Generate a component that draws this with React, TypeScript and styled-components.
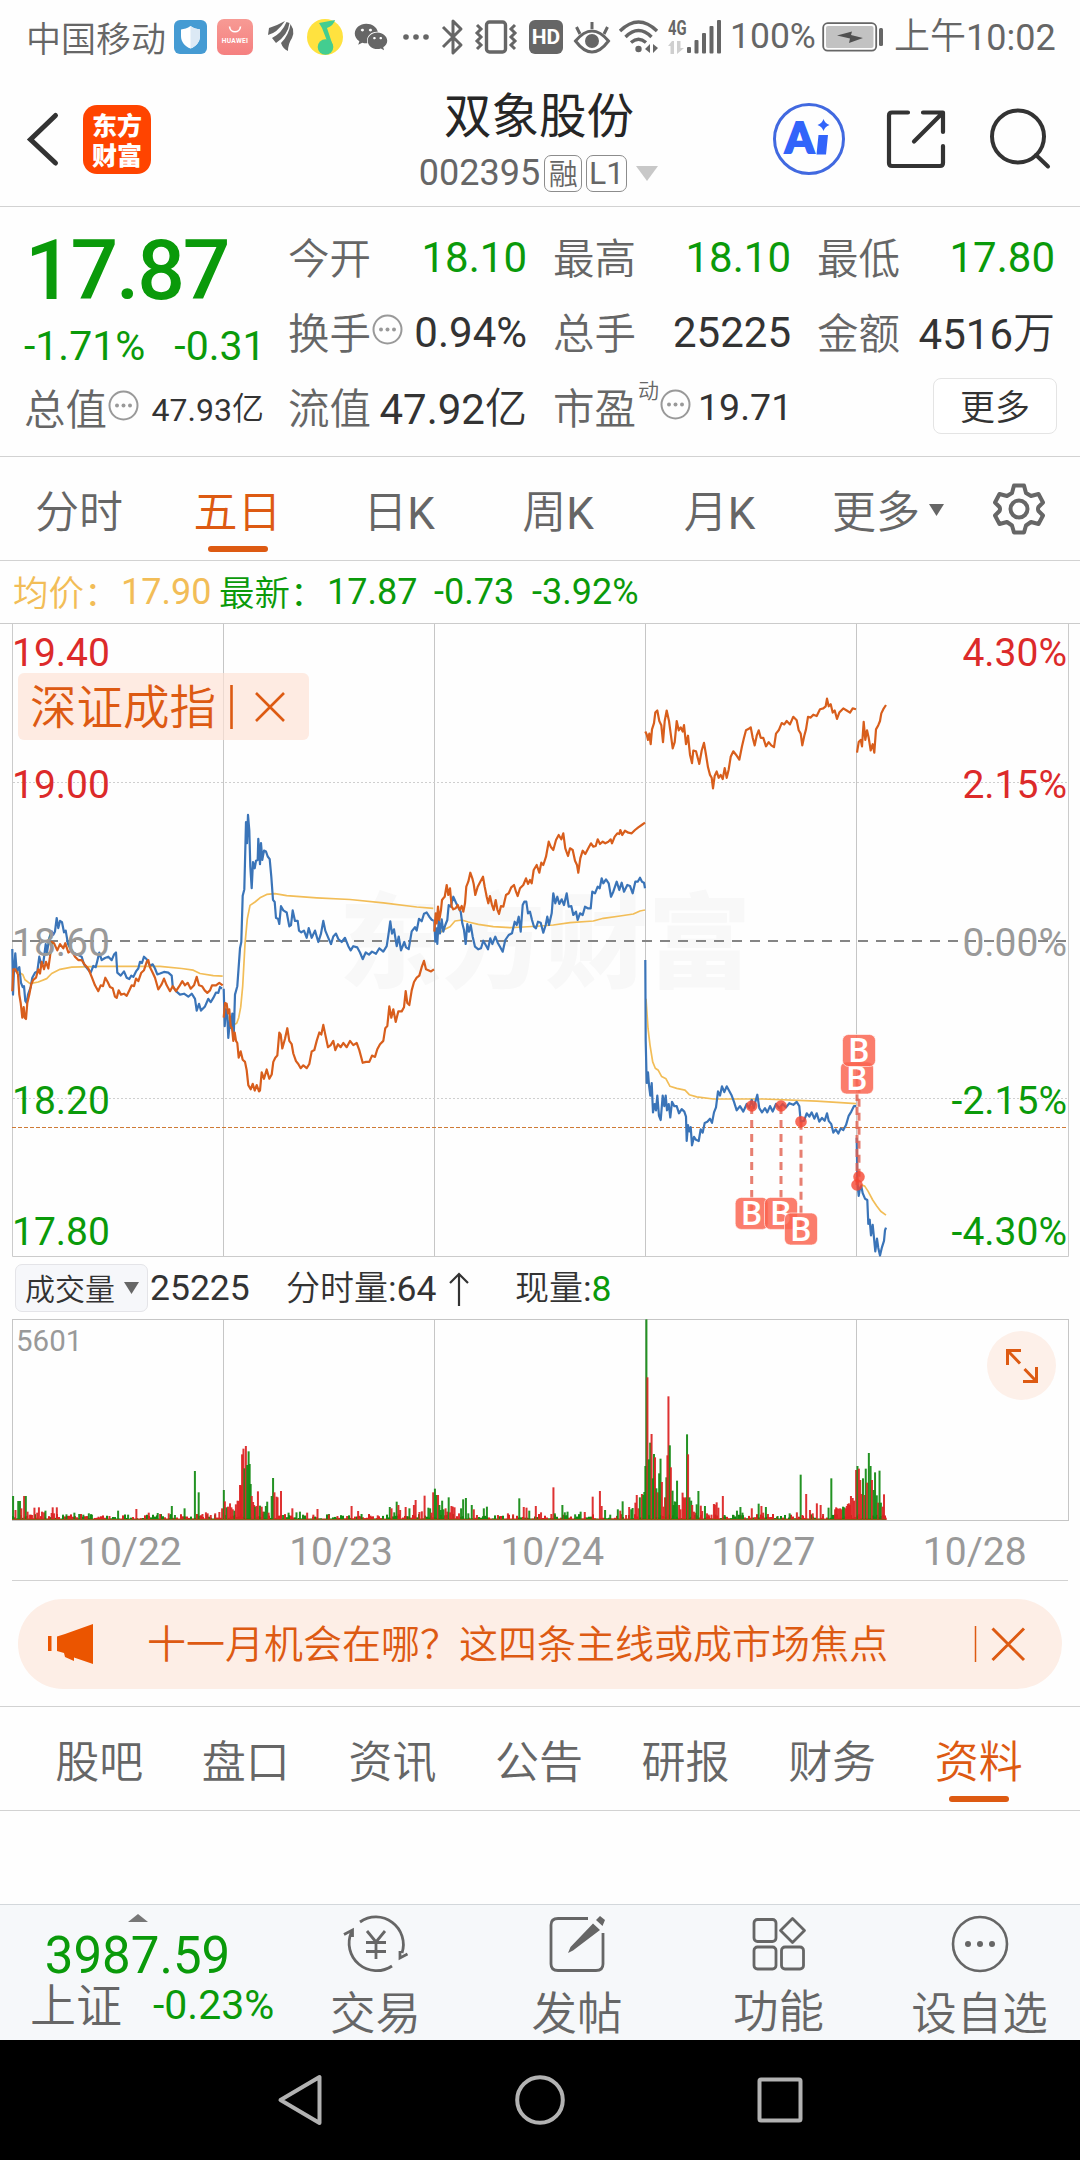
import React from 'react';
import styled, { createGlobalStyle } from 'styled-components';
import { FaWeixin } from 'react-icons/fa';

const C = {
  green: '#0a9a0a',
  red: '#dc2a2a',
  orange: '#dd5a12',
  ink: '#333333',
  grey: '#666666',
  pale: '#999999',
  line: '#d2d2d2',
  yellow: '#f2bd57',
  blue: '#3a74b8',
};

const Global = createGlobalStyle`
  html, body { margin: 0; padding: 0; background: #fdfdfd; }
  body { font-family: Roboto, "Noto Sans CJK SC", sans-serif; -webkit-font-smoothing: antialiased; }
  * { box-sizing: border-box; }
`;

const Page = styled.main`
  width: 1080px;
  height: 2160px;
  display: flex;
  flex-direction: column;
  background: #fefefe;
  color: ${C.ink};
  overflow: hidden;
`;

/* Chinese text is set one weight lighter than the figures beside it. */
const Han = styled.span<{ $up?: number }>`
  display: inline-block;
  font-family: "Noto Sans CJK SC", sans-serif;
  font-weight: 350;
  transform: translateY(-${(p) => p.$up ?? 1.5}px);
`;

const Glyph = styled.svg<{ $l?: number }>`
  flex: none;
  display: block;
  overflow: visible;
  margin-left: ${(p) => p.$l ?? 0}px;
`;

/* ---------- status bar ---------- */

const StatusBar = styled.header`
  height: 73px;
  flex: none;
  display: flex;
  align-items: center;
  padding-left: 26px;
  color: ${C.grey};
  font-size: 36px;
  line-height: 73px;
  white-space: nowrap;
`;

const Carrier = styled(Han)`
  flex: none;
  width: 139px;
  font-size: 35px;
`;

const StatusText = styled.span<{ $w: number; $l?: number; $size?: number }>`
  flex: none;
  width: ${(p) => p.$w}px;
  margin-left: ${(p) => p.$l ?? 0}px;
  font-size: ${(p) => p.$size ?? 36}px;
`;

const WeChat = styled(FaWeixin)`
  flex: none;
  width: 34px;
  height: 34px;
  margin-left: 11px;
`;

const AppStore = styled.span`
  flex: none;
  width: 36px;
  height: 36px;
  margin-left: 10px;
  border-radius: 7px;
  background: linear-gradient(#f79a94, #f58080);
  color: #fff;
  display: flex;
  flex-direction: column;
  align-items: center;
  gap: 2px;
  font-size: 6.6px;
  font-weight: 700;
  line-height: 8px;
  letter-spacing: 0.3px;
`;

const HdBadge = styled.span`
  flex: none;
  width: 34px;
  height: 34px;
  margin-left: 12px;
  border-radius: 6px;
  background: ${C.grey};
  color: #fff;
  font-size: 21px;
  font-weight: 700;
  line-height: 34px;
  text-align: center;
`;

const Cellular = styled.span`
  flex: none;
  display: flex;
  align-items: flex-end;
  margin-left: 9px;
  height: 34px;
`;

const Generation = styled.span`
  display: flex;
  flex-direction: column;
  gap: 5px;
  width: 19px;
  height: 34px;
  font-size: 20px;
  font-weight: 700;
  line-height: 16px;
  span { transform: scaleX(0.74); transform-origin: left; }
`;

function StatusIcons() {
  return (
    <>
      <Glyph width="33" height="34" viewBox="0 0 33 34" $l={9}>
        <rect width="33" height="34" rx="6" fill="#459bd3" />
        <path d="M16.500 6 C19.500 8.500 23 9 26 9.500 V16 C26 22 22 26.500 16.500 28.500 C11 26.500 7 22 7 16 V9.500 C10 9 13.500 8.500 16.500 6Z" fill="#fff" />
        <path d="M16.500 6 C19.500 8.500 23 9 26 9.500 V16 C26 22 22 26.500 16.500 28.500Z" fill="#dce9f5" />
      </Glyph>
      <AppStore>
        <Glyph width="14" height="16" viewBox="0 0 14 16">
          <path d="M1.500 7.500 C2 14.500 12 14.500 12.500 7.500" fill="none" stroke="#fff" strokeWidth="1.600" />
        </Glyph>
        <span>HUAWEI</span>
      </AppStore>
      <Glyph width="26" height="31" viewBox="0 0 26 31" $l={15} fill={C.grey}>
        <path d="M0 14 L1 7 Q10 4 17 0 Q9 12 0 14Z" />
        <path d="M4 17 Q14 12 18.500 1 L21.500 2 Q20 14 8 22Z" />
        <path d="M13 22 Q21 14 22.500 3 L25 8 Q26 13 24 17 Q20 23 20 30Q15 28 13 22Z" />
      </Glyph>
      <Glyph width="36" height="36" viewBox="0 0 36 36" $l={13}>
        <circle cx="18" cy="18" r="18" fill="#ffe23f" />
        <circle cx="18.500" cy="28" r="7.800" fill="#43cd90" />
        <path d="M12 4 L28 1 Q27 6 20 9 L26 27 L22 27 L15 9Z" fill="#43cd90" />
      </Glyph>
      <WeChat />
      <Glyph width="26" height="8" viewBox="0 0 26 8" $l={15} fill={C.grey}>
        <circle cx="3" cy="4" r="2.800" /><circle cx="13" cy="4" r="2.800" /><circle cx="23" cy="4" r="2.800" />
      </Glyph>
      <Glyph width="21" height="36" viewBox="0 0 21 36" $l={13} fill="none" stroke={C.grey} strokeWidth="3" strokeLinejoin="round">
        <path d="M1 8 L19 26 L11 34 V2 L19 10 L1 28" />
      </Glyph>
      <Glyph width="42" height="34" viewBox="0 0 42 34" $l={12} fill="none" stroke={C.grey} strokeWidth="3.400">
        <rect x="11.500" y="2" width="19" height="30" rx="3" />
        <path d="M2 5 L6 9 L2 13 L6 17 L2 21 L6 25 L2 29 M40 5 L36 9 L40 13 L36 17 L40 21 L36 25 L40 29" strokeWidth="3" />
      </Glyph>
      <HdBadge>HD</HdBadge>
      <Glyph width="36" height="32" viewBox="0 0 36 32" $l={11} fill="none" stroke={C.grey} strokeWidth="3">
        <path d="M1.500 20 Q18 0 34.500 20 Q18 42 1.500 20Z" />
        <circle cx="18" cy="20" r="5.500" fill={C.grey} />
        <path d="M18 1 V8 M2.500 6 L6 13 M33.500 6 L30 13" />
      </Glyph>
      <Glyph width="40" height="33" viewBox="0 0 40 33" $l={9} fill="none" stroke={C.grey} strokeWidth="3.400">
        <path d="M1 11 Q19.500 -7 38 11 M6.500 17 Q19.500 4 32.500 17 M12 22.500 Q19.500 16 27 22.500" />
        <circle cx="19.500" cy="29" r="3.200" fill={C.grey} stroke="none" />
        <path d="M31 24 V33 L26 29Z M34 24 V33 L39 28Z" fill={C.grey} stroke="none" />
      </Glyph>
      <Cellular>
        <Generation>
          <span>4G</span>
          <Glyph width="16" height="13" viewBox="0 0 16 13" fill="#cfcfcf">
            <path d="M4 0 L0 5 H2.500 V13 H6 V0Z M9 0 V13 L16 7 H12.500 V0Z" />
          </Glyph>
        </Generation>
        <Glyph width="35" height="34" viewBox="0 0 35 34" fill={C.grey}>
          <rect x="0" y="27" width="4" height="6" rx="1" />
          <rect x="7.500" y="20" width="4" height="13.500" rx="1" />
          <rect x="15" y="13" width="4" height="20.500" rx="1" />
          <rect x="22.500" y="6" width="4" height="27.500" rx="1" />
          <rect x="30" y="0" width="4" height="33.500" rx="1" />
        </Glyph>
      </Cellular>
    </>
  );
}

const Battery = () => (
  <Glyph width="62" height="30" viewBox="0 0 62 30" $l={9}>
    <rect x="1.200" y="1.200" width="53" height="27.500" rx="4.500" fill="none" stroke={C.grey} strokeWidth="1.800" />
    <rect x="4" y="4" width="47.500" height="22" rx="2" fill="#c2c2c2" />
    <path d="M15 13.500 L30 9.500 L29 13 L41 16 L27 21 L28 16.500Z" fill="#505050" />
    <rect x="57" y="6" width="4" height="18" rx="1.500" fill={C.grey} />
  </Glyph>
);

/* ---------- title bar ---------- */

const TitleBar = styled.div`
  height: 134px;
  flex: none;
  display: grid;
  grid-template-columns: 400px 278px 1fr;
  border-bottom: 1px solid ${C.line};
`;

const TitleLeft = styled.div`
  display: flex;
  padding: 32px 0 0 27px;
`;

const Logo = styled.div`
  width: 68px;
  height: 69px;
  margin-left: 24px;
  padding-top: 4px;
  border-radius: 14px;
  background: #ff4400;
  color: #fff;
  font: 900 25px/30px "Noto Sans CJK SC", sans-serif;
  text-align: center;
`;

const TitleCentre = styled.div`
  display: flex;
  flex-direction: column;
  align-items: center;
`;

const StockName = styled.h1`
  margin: 10px 0 0;
  height: 62px;
  font: 400 47.500px/60px "Noto Sans CJK SC", sans-serif;
  color: #262626;
`;

const StockCode = styled.div`
  display: flex;
  align-items: center;
  gap: 4px;
  height: 56px;
  margin-left: -1px;
  font-size: 36px;
  color: ${C.grey};
`;

const Badge = styled.span`
  width: ${(p) => 38}px;
  height: 37px;
  display: flex;
  align-items: center;
  justify-content: center;
  border: 1px solid #8c8c8c;
  border-radius: 7px;
  font-size: 32px;
  line-height: 35px;
  white-space: nowrap;
  ${Han} { font-size: 29px; }
  & + & { width: 41px; }
`;

const TitleActions = styled.div`
  display: flex;
  align-items: flex-start;
  padding: 29px 0 0 2px;
`;

/* ---------- quote ---------- */

const Quote = styled.section`
  height: 250px;
  flex: none;
  display: grid;
  grid-template-columns: 264px 1fr;
  padding: 13px 26px 0 25px;
  border-bottom: 1px solid ${C.line};
`;

const QuoteMain = styled.div`
  display: flex;
  flex-direction: column;
`;

const Price = styled.div`
  height: 100px;
  font-size: 84px;
  font-weight: 500;
  line-height: 102px;
  letter-spacing: -2.2px;
  color: ${C.green};
`;

const Change = styled.div`
  display: flex;
  gap: 29px;
  height: 51px;
  margin-left: -1px;
  font-size: 41px;
  line-height: 52px;
  color: ${C.green};
`;

const Metrics = styled.div`
  display: grid;
  grid-template-columns: 238px 237px 237px;
  grid-template-rows: repeat(3, 75px);
  column-gap: 27px;
`;

const Metric = styled.div<{ $size?: number; $tone?: string; $start?: boolean }>`
  display: flex;
  align-items: center;
  height: 75px;
  line-height: 77px;
  white-space: nowrap;
  font-size: ${(p) => p.$size ?? 42}px;
  color: ${(p) => p.$tone ?? C.ink};
  > b {
    margin-left: ${(p) => (p.$start ? '7px' : 'auto')};
    font-weight: 400;
  }
`;

const CapMetric = styled(Metric)`
  width: 239px;
`;

const MetricName = styled(Han)`
  margin-left: -1px;
  font-size: 41.500px;
  color: ${C.grey};
`;

const Sup = styled(Han)`
  align-self: flex-start;
  margin: -18px 0 0 2px;
  font-size: 21px;
  color: ${C.grey};
`;

const MoreButton = styled.button`
  justify-self: end;
  width: 124px;
  height: 56px;
  margin: 8px -2px 0 0;
  padding: 0 6px 2px;
  border: 1.500px solid #e4e4e4;
  border-radius: 8px;
  background: #fff;
  color: ${C.ink};
  font: 350 35px/48px "Noto Sans CJK SC", sans-serif;
`;

const InfoGlyph = styled(Glyph)`
  margin-bottom: 6px;
`;

const Info = () => (
  <InfoGlyph width="31" height="31" viewBox="0 0 31 31" $l={1}>
    <circle cx="15.500" cy="15.500" r="14" fill="none" stroke="#999" strokeWidth="2" />
    <g fill="#999"><circle cx="9" cy="15.500" r="2" /><circle cx="15.500" cy="15.500" r="2" /><circle cx="22" cy="15.500" r="2" /></g>
  </InfoGlyph>
);

/* ---------- period tabs ---------- */

const PeriodTabs = styled.nav`
  height: 104px;
  flex: none;
  display: grid;
  grid-template-columns: 158px 159px 161px 160px 160px 168px 1fr;
  border-bottom: 1px solid ${C.line};
`;

const Tab = styled.a<{ $active?: boolean; $nudge?: number }>`
  display: flex;
  flex-direction: column;
  align-items: center;
  padding-left: ${(p) => p.$nudge ?? 0}px;
  padding-top: 20px;
  font-size: 44px;
  line-height: 66px;
  color: ${(p) => (p.$active ? C.orange : C.grey)};
  white-space: nowrap;
  &::after {
    content: '';
    width: 60px;
    height: 6px;
    margin-top: 3px;
    border-radius: 3px;
    background: ${(p) => (p.$active ? C.orange : 'transparent')};
  }
`;

const WithArrow = styled.span`
  display: flex;
  align-items: center;
  gap: 9px;
`;

const Legend = styled.div`
  height: 62px;
  flex: none;
  display: flex;
  align-items: center;
  padding-left: 13px;
  font-size: 36px;
  line-height: 62px;
  color: ${C.green};
  white-space: pre;
`;

const LegendItem = styled.span<{ $w: number; $tone?: string }>`
  flex: none;
  width: ${(p) => p.$w}px;
  color: ${(p) => p.$tone ?? C.green};
  ${Han} { font-size: 35.500px; }
`;

/* ---------- charts ---------- */

const ChartBox = styled.section`
  position: relative;
  height: 634px;
  flex: none;
`;

const Canvas = styled.svg`
  display: block;
`;

const AxisLabel = styled.span<{ $y: number; $tone: string; $right?: boolean }>`
  position: absolute;
  top: ${(p) => p.$y - 623 - 23}px;
  ${(p) => (p.$right ? 'right: 13px' : 'left: 12px')};
  font-size: 39px;
  line-height: 48px;
  color: ${(p) => p.$tone};
`;

const CompareTag = styled.div`
  position: absolute;
  left: 18px;
  top: 50px;
  width: 291px;
  height: 67px;
  padding-left: 12px;
  display: flex;
  align-items: center;
  border-radius: 6px;
  background: rgba(253, 226, 212, 0.68);
  color: ${C.orange};
  font-size: 46.500px;
  line-height: 64px;
`;

type Series = { ox: number; oy: number; sx: number; sy: number; d: string };
const A = { ox: 0, oy: 620, sx: 1 / 3, sy: 1 / 2.376 };
const B = { ox: 420, oy: 780, sx: 1 / 3, sy: 1 / 3 };
const D = { ox: 630, oy: 620, sx: 1 / 3, sy: 1 / 2.376 };

const priceLine: Series[] = [
  { ...A, d: '37,782 39,890 42,830 46,792 50,835 58,825 63,862 68,872 72,870 76,905 80,910 84,890 92,872 97,850 105,838 112,835 118,800 124,820 130,815 137,770 141,790 148,755 155,740 160,748 165,740 170,708 175,732 180,715 186,718 192,742 197,738 204,770 212,782 220,790 232,795 245,800 252,818 262,828 272,838 280,822 287,825 292,810 298,790 305,808 315,803 325,800 335,808 342,795 348,790 352,838 362,845 372,835 380,850 388,853 394,845 400,848 408,835 415,828 420,812 426,815 432,800 440,806 450,822 458,818 465,828 472,842 480,840 492,836 505,838 515,845 518,870 528,882 540,890 552,888 565,895 575,888 585,900 590,928 597,912 603,928 615,918 625,900 632,908 640,898 648,885 655,886 660,872 666,876' },
  { ...A, d: '671,876 674,965 678,925 682,940 685,993 690,950 694,970 697,935 701,990 705,890 712,870 720,780 724,765 728,655 733,640 738,480 741,530 744,463 748,500 751,585 755,637 759,575 764,590 768,572 773,570 775,520 780,580 783,530 787,570 792,548 798,550 803,562 809,568 814,610 819,665 824,670 828,708 834,710 838,722 843,680 850,690 860,695 868,728 873,725 878,690 885,715 893,715 897,738 904,742 912,738 920,755 926,732 935,755 945,738 955,765 963,745 970,715 976,738 985,755 993,770 1000,752 1008,745 1015,758 1025,765 1035,755 1045,775 1052,785 1060,775 1072,778 1080,790 1088,806 1097,790 1107,795 1116,788 1128,793 1138,780 1150,788 1160,775 1165,750 1171,716 1176,745 1182,735 1190,775 1196,752 1203,785 1213,765 1218,778 1226,782 1235,740 1245,730 1250,738 1257,710 1265,716 1272,698 1280,695 1288,705 1295,712 1300,714' },
  { ...B, d: '43,420 46,485 50,445 52,492 56,420 60,460 65,418 70,455 76,435 82,420 86,375 92,380 100,350 108,368 116,385 122,395 127,430 132,450 137,492 142,432 147,455 152,435 158,470 165,500 175,508 183,505 190,482 197,495 204,508 211,475 217,492 226,470 233,488 240,500 248,515 256,480 266,465 276,460 284,425 290,435 296,410 302,455 308,375 313,365 319,365 324,400 330,395 336,420 342,440 348,445 354,425 362,428 370,458 377,435 382,410 387,435 395,400 400,340 406,370 412,350 418,372 425,358 432,375 440,340 446,380 454,378 460,405 468,395 473,420 480,400 488,405 495,380 503,385 512,385 517,335 525,340 533,320 539,325 545,295 550,310 558,298 566,310 573,350 580,335 590,305 598,330 605,308 612,335 622,315 630,318 638,340 646,305 653,305 660,293 666,305 672,308 675,325' },
  { ...D, d: '46,808 47,1000 50,1100 54,1075 57,1105 61,1130 65,1100 69,1170 74,1150 78,1165 82,1130 87,1178 92,1188 98,1130 103,1155 107,1130 111,1165 116,1150 121,1182 126,1145 133,1155 140,1155 147,1172 155,1162 163,1168 168,1180 170,1238 174,1200 178,1215 182,1205 186,1248 192,1228 198,1235 206,1238 212,1210 218,1218 224,1195 232,1192 240,1185 246,1195 252,1170 258,1158 264,1120 270,1130 276,1108 283,1122 290,1108 297,1118 305,1130 312,1145 320,1165 330,1155 340,1168 350,1150 358,1160 365,1140 371,1160 376,1145 382,1128 388,1160 396,1170 405,1160 412,1170 420,1155 428,1168 438,1150 448,1160 458,1150 468,1158 478,1148 490,1152 500,1145 508,1155 512,1192 522,1190 530,1172 538,1180 545,1170 553,1185 560,1172 568,1192 576,1183 584,1190 591,1172 596,1190 604,1198 610,1218 617,1210 625,1220 632,1208 640,1212 648,1200 656,1178 664,1168 672,1155 678,1155' },
  { ...D, d: '680,1230 682,1330 686,1368 690,1350 694,1345 698,1362 705,1375 712,1378 715,1435 719,1425 723,1462 728,1437 732,1468 736,1500 741,1470 745,1492 750,1510 756,1490 762,1475 765,1450 768,1444' },
];

const indexLine: Series[] = [
  { ...A, d: '37,882 40,830 46,830 54,842 58,890 62,910 67,945 71,920 74,945 78,948 82,910 88,890 94,865 100,855 108,850 115,830 120,840 125,812 132,830 138,812 145,828 150,800 155,765 162,768 172,785 180,770 190,780 196,768 205,790 215,785 225,800 235,808 245,808 255,820 265,828 275,848 285,868 295,882 302,868 309,870 316,850 323,860 330,872 338,875 345,895 350,898 356,880 363,890 372,888 380,893 388,880 395,868 402,870 408,852 415,858 424,838 432,832 440,812 445,808 450,825 458,838 465,850 475,878 485,865 492,852 500,868 510,882 518,870 528,882 538,870 547,858 555,868 563,862 572,876 582,868 590,848 597,868 606,870 614,880 622,886 630,880 636,868 648,868 658,862 668,868' },
  { ...A, d: '671,945 675,910 680,912 684,935 688,925 692,965 696,970 700,1000 704,980 708,1000 712,1005 716,1040 722,1025 728,1045 735,1050 740,1070 745,1105 752,1115 758,1102 764,1118 770,1105 777,1120 780,1118 785,1075 792,1090 800,1068 808,1090 815,1080 820,1050 826,1040 832,1035 838,980 842,985 847,1018 855,995 862,970 868,1000 875,1008 880,1030 888,1048 895,1055 902,1065 910,1058 920,1065 928,1055 935,1025 943,1022 950,1000 958,980 964,985 970,962 976,985 984,1015 992,1010 1000,1000 1006,1022 1014,1008 1022,1015 1030,1005 1040,1015 1050,1000 1060,1010 1070,1005 1078,1022 1088,1052 1098,1050 1108,1050 1116,1035 1125,1038 1132,1020 1140,1008 1150,1000 1156,970 1162,965 1168,918 1174,945 1180,925 1187,955 1195,930 1205,930 1212,920 1217,882 1222,910 1228,915 1235,880 1242,860 1250,850 1258,845 1265,825 1272,810 1278,830 1285,832 1293,835 1302,830' },
  { ...B, d: '43,455 47,400 50,430 54,380 58,420 63,390 66,360 70,355 74,350 80,315 85,345 90,325 95,380 100,388 107,385 113,375 119,390 125,378 130,395 135,370 139,320 145,305 151,278 157,295 161,312 166,345 173,320 181,305 189,290 194,320 200,350 205,370 210,348 216,375 221,390 227,360 232,388 237,402 243,378 250,380 258,345 266,340 274,322 282,315 288,335 293,348 300,325 310,315 318,295 324,312 330,300 335,310 341,270 350,255 358,278 364,248 370,255 378,230 386,185 392,200 400,210 408,180 416,165 424,178 430,160 436,205 444,228 450,205 458,210 465,242 471,255 475,278 481,235 488,212 496,222 505,205 513,190 520,200 527,198 533,178 540,192 548,185 556,190 565,185 572,178 576,190 584,170 592,160 598,162 601,150 607,165 615,152 625,158 635,160 645,150 655,142 665,135 675,128' },
  { ...D, d: '46,265 50,272 54,285 58,270 62,295 66,260 72,245 76,220 82,215 88,240 94,250 99,290 104,240 110,215 117,240 122,270 128,305 134,290 140,240 146,262 152,255 158,265 162,250 168,295 174,275 180,320 186,340 190,310 198,312 208,342 215,310 222,292 228,320 234,350 240,368 245,375 249,400 254,370 260,360 266,375 272,368 278,378 284,352 290,375 296,355 302,325 310,312 318,320 328,332 336,300 342,280 348,262 358,258 362,255 368,280 374,298 380,275 386,262 392,280 400,280 408,300 416,290 424,298 432,302 438,270 446,262 455,245 463,248 470,240 480,248 490,230 500,238 506,262 512,270 517,298 523,275 528,260 534,230 542,232 550,225 560,228 570,212 580,210 587,205 591,187 596,205 602,200 608,220 614,215 621,235 628,220 640,210 650,215 660,220 668,210 678,212' },
  { ...D, d: '681,315 686,290 692,285 696,300 701,242 706,285 711,262 716,280 722,310 728,295 733,315 738,260 745,250 750,240 754,222 760,212 768,202' },
];

const averageLine: Series[] = [
  { ...A, d: '37,830 55,836 68,842 75,855 90,864 115,860 140,852 155,840 180,830 215,825 300,823 480,823 545,828 580,832 600,840 640,845 668,846' },
  { ...A, d: '671,900 680,935 690,960 700,962 710,958 716,945 722,920 728,870 735,770 742,710 750,678 765,670 780,660 800,652 825,650 860,655 950,660 1050,664 1150,672 1250,682 1300,685' },
  { ...B, d: '43,470 55,462 70,450 90,440 105,423 125,420 145,426 175,433 220,440 270,443 310,441 360,438 400,435 450,428 520,423 550,415 600,408 640,402 660,393 675,390' },
  { ...D, d: '48,900 54,970 60,1010 68,1050 76,1065 85,1070 95,1085 108,1090 120,1108 140,1113 165,1117 178,1128 200,1133 250,1138 400,1138 560,1143 620,1146 678,1149' },
  { ...D, d: '684,1360 694,1342 704,1345 714,1357 728,1378 740,1392 752,1405 768,1414' },
];

const place = ({ ox, oy, sx, sy, d }: Series) =>
  d
    .split(' ')
    .map((p) => {
      const [x, y] = p.split(',').map(Number);
      return `${(ox + x * sx).toFixed(1)},${(oy + y * sy).toFixed(1)}`;
    })
    .join(' ');

const Lines = ({ series, color, width }: { series: Series[]; color: string; width: number }) => (
  <g fill="none" stroke={color} strokeWidth={width} strokeLinejoin="round">
    {series.map((s, i) => (
      <polyline key={i} points={place(s)} />
    ))}
  </g>
);

const dayEdges = [223.5, 434.5, 645.5, 856.5];

const buys = [
  { x: 751.7, dot: 1106, label: 1213.4 },
  { x: 781, dot: 1106, label: 1213.4 },
  { x: 801, dot: 1121.7, label: 1229 },
  { x: 857, dot: 1185, label: 1078 },
  { x: 859, dot: 1176.8, label: 1050.5 },
];

function BuyMarks() {
  return (
    <g>
      {buys.map((b) => (
        <g key={b.x}>
          <line x1={b.x} x2={b.x} y1={b.dot} y2={b.label} stroke="#e2604f" strokeWidth="3" strokeDasharray="8 6" opacity="0.8" />
          <circle cx={b.x} cy={b.dot} r="5.800" fill="#f5452f" opacity="0.8" />
        </g>
      ))}
      {buys.map((b) => (
        <g key={b.x}>
          <rect x={b.x - 16.5} y={b.label - 16} width="33" height="32" rx="6" fill="#fa6450" fillOpacity="0.84" stroke="#fff" strokeOpacity="0.6" />
          <text x={b.x} y={b.label + 11.5} textAnchor="middle" fontFamily="Roboto, sans-serif" fontWeight="500" fontSize="33" fill="#fff">B</text>
        </g>
      ))}
    </g>
  );
}

function PriceChart() {
  return (
    <ChartBox>
      <Canvas width="1080" height="634" viewBox="0 623 1080 634">
        <text x="339" y="980" fontFamily="Noto Sans CJK SC, sans-serif" fontWeight="900" fontSize="103" fill="#f8f8f8">东方财富</text>
        <path d="M0 623.500H1080 M12.500 623V1256.500H1068.500V623" fill="none" stroke="#cbcbcb" />
        {dayEdges.map((x) => <line key={x} x1={x} x2={x} y1="624" y2="1256" stroke="#c6c6c6" />)}
        <path d="M13 782.500H1068 M13 1098.500H1068" stroke="#cfcfcf" strokeDasharray="2 2" />
        <path d="M12 941H1068" stroke="#858585" strokeWidth="2" strokeDasharray="10 8" />
        <path d="M12 1127.500H1068" stroke="#cf7a35" strokeWidth="1.200" strokeDasharray="4 2" />
        <Lines series={averageLine} color={C.yellow} width={1.7} />
        <Lines series={priceLine} color={C.blue} width={2.2} />
        <Lines series={indexLine} color="#d85e1c" width={2.2} />
        <BuyMarks />
      </Canvas>
      <AxisLabel $y={652} $tone={C.red}>19.40</AxisLabel>
      <AxisLabel $y={784} $tone={C.red}>19.00</AxisLabel>
      <AxisLabel $y={942} $tone={C.pale}>18.60</AxisLabel>
      <AxisLabel $y={1100} $tone={C.green}>18.20</AxisLabel>
      <AxisLabel $y={1231} $tone={C.green}>17.80</AxisLabel>
      <AxisLabel $right $y={652} $tone={C.red}>4.30%</AxisLabel>
      <AxisLabel $right $y={784} $tone={C.red}>2.15%</AxisLabel>
      <AxisLabel $right $y={942} $tone={C.pale}>0.00%</AxisLabel>
      <AxisLabel $right $y={1100} $tone={C.green}>-2.15%</AxisLabel>
      <AxisLabel $right $y={1231} $tone={C.green}>-4.30%</AxisLabel>
      <CompareTag>
        <Han $up={3.5}>深证成指</Han>
        <Glyph width="60" height="46" viewBox="0 0 60 46" $l={13} fill="none" stroke={C.orange} strokeWidth="2.600">
          <path d="M2.500 1V45" />
          <path d="M27 9 L55 37 M55 9 L27 37" />
        </Glyph>
      </CompareTag>
    </ChartBox>
  );
}

const VolumeHead = styled.div`
  height: 62px;
  flex: none;
  display: flex;
  align-items: center;
  padding-left: 15px;
  font-size: 35.500px;
  line-height: 62px;
  white-space: nowrap;
`;

const IndicatorChip = styled.span`
  flex: none;
  display: flex;
  align-items: center;
  gap: 9px;
  width: 133px;
  height: 48px;
  margin-right: 2px;
  padding-left: 9px;
  border: 1px solid #e4e4e8;
  border-radius: 7px;
  background: #f6f7fa;
  font-size: 30px;
  line-height: 44px;
`;

const VolumeItem = styled.span<{ $w: number }>`
  flex: none;
  width: ${(p) => p.$w}px;
  ${Han} { font-size: 34px; }
  em { font-style: normal; color: ${C.green}; }
`;

const UpArrow = styled(Glyph)`
  margin: 2px 46px 0 1px;
`;

const VolumeBox = styled.section`
  position: relative;
  height: 203px;
  flex: none;
`;

const VolumeMax = styled.span`
  position: absolute;
  left: 16px;
  top: 4px;
  font-size: 29.500px;
  line-height: 36px;
  color: ${C.pale};
`;

const ExpandButton = styled.button`
  position: absolute;
  left: 987px;
  top: 12px;
  width: 69px;
  height: 69px;
  padding: 0;
  display: flex;
  align-items: center;
  justify-content: center;
  border: 0;
  border-radius: 50%;
  background: #fdf0e9;
`;

const volumeLeft = '38,708g 45,750r 53,723g 58,723g 62,745r 70,708r 75,708g 80,755r 86,764r 93,765r 100,743r 108,758r 113,742r 122,755r 128,757r 132,752g 150,759r 153,742r 157,760r 165,742r 183,764g 193,763g 216,758g 230,762g 242,764g 258,760g 267,764g 286,770r 318,768r 343,752g 372,764g 396,747r 432,758r 458,759g 465,762r 490,760r 495,764g 499,738g 508,765g 536,745g 566,633g 577,697g 588,762r 598,757r 603,760r 612,765r 625,760r 637,756r 645,745r 650,690g 653,724r 658,742g 662,740r 668,730r 672,742r 676,748r 681,752g 685,733r 690,722r 693,723r 697,675r 700,676r 703,583r 707,566r 710,625g 714,558r 718,615g 722,574g 725,612g 728,672g 731,708r 735,726r 738,735r 741,740g 745,738r 749,694r 755,737g 760,740r 764,755r 768,755g 772,738g 776,725g 780,758r 789,708g 793,654g 797,697r 803,710r 806,712r 816,693r 822,765g 838,758g 849,745r 861,757g 871,755g 880,764g 892,758r 910,764r 922,747r 955,764r 980,768r 1008,768r 1021,738r 1040,753r 1050,762g 1076,767r 1097,766r 1132,741g 1137,745r 1145,757g 1152,725g 1157,735r 1162,750r 1178,741r 1189,745g 1202,735r 1207,720r 1218,756r 1225,754r 1233,707r 1244,743g 1249,745g 1253,758r 1258,697r 1263,686g 1267,705g 1272,705r 1276,735g 1280,750g 1284,722g 1288,748g 1294,745r 1299,755r 1303,712g 1307,757r 1311,738r 1315,740r 1320,742r 1333,760r 1339,745g 1345,718g 1353,714g 1360,760g 1370,735g 1376,748r 1385,765r 1405,745g 1414,740g 1446,765r 1475,760r 1490,763r 1508,715g 1521,741r 1529,743r 1537,752g 1556,738r';
const volumeRight = '3,757r 33,762r 39,682r 43,760g 65,735g 72,757g 80,755g 102,763g 118,755g 130,756r 153,710r 174,693r 179,738r 189,750g 204,764g 226,748g 233,752r 240,724g 250,765r 259,741r 265,748g 269,744g 277,728r 281,705r 286,745r 290,712g 296,702r 300,705g 303,696g 306,618g 309,178g 312,352r 316,598g 320,548g 324,522r 328,655g 331,582g 334,592r 338,685g 342,697r 346,640g 350,596g 354,666r 359,740r 363,712r 367,652g 370,586r 373,409r 377,556g 380,622r 385,692g 388,735g 391,724g 394,726g 398,662g 404,735r 408,748r 414,698r 417,712r 420,715r 423,712r 427,523g 430,583r 434,712g 439,722g 442,735r 447,755r 452,758r 455,733g 460,693g 467,737r 471,753r 479,738g 485,760r 490,764r 498,764r 505,732r 508,734r 513,727r 518,743r 531,708r 536,765g 562,765g 572,752g 582,741g 588,758g 615,745r 635,731g 643,738r 648,758r 656,741g 662,762r 690,768g 725,760g 746,757r 757,644g 762,765r 773,702r 784,750r 792,760r 804,730r 815,735r 822,762r 838,743g 846,655g 857,748r 860,742r 863,745r 868,746r 872,745r 876,748r 880,740g 884,742g 888,745r 891,738r 894,732r 897,730r 900,735r 903,708r 908,714r 912,722r 918,630r 922,618g 926,626r 930,660r 934,702r 938,655g 942,705r 946,626g 950,668r 955,579g 960,618g 964,660r 969,690g 973,637g 978,706g 982,728r 986,632g 990,728g 995,740r 999,703r 1004,773r';

const toBars = (src: string, ox: number) =>
  src.split(' ').map((t) => {
    const [x, rest] = t.split(',');
    return { x: ox + Number(x) / 2.904, y: 1260 + parseInt(rest, 10) / 3, up: rest.endsWith('r') };
  });

const bars = [...toBars(volumeLeft, 0), ...toBars(volumeRight, 540)];

/* Thin trades along the base line, from a small fixed generator. */
const floorBars = (() => {
  const out: { x: number; h: number; up: boolean }[] = [];
  let seed = 17;
  for (let x = 12; x < 886; x += 2) {
    seed = (seed * 1103515245 + 12345) % 2147483648;
    const r = seed / 2147483648;
    out.push({ x, h: 1.5 + r * r * 4.5, up: (seed >> 8) % 5 < 3 });
  }
  return out;
})();

function VolumeChart() {
  const tone = (up: boolean) => (up ? '#dc2222' : '#128a12');
  return (
    <VolumeBox>
      <Canvas width="1080" height="203" viewBox="0 1319 1080 203">
        <rect x="12.500" y="1319.500" width="1056" height="201" fill="none" stroke="#c6c6c6" />
        {dayEdges.map((x) => <line key={x} x1={x} x2={x} y1="1320" y2="1520" stroke="#c6c6c6" />)}
        {floorBars.map((b) => <rect key={b.x} x={b.x} y={1520 - b.h} width="2" height={b.h} fill={tone(b.up)} />)}
        {bars.map((b, i) => <rect key={i} x={b.x - 1} y={b.y} width="2" height={1520 - b.y} fill={tone(b.up)} fillOpacity="0.93" />)}
        <path d="M12 1519.500H886" stroke="#8b5a1c" />
      </Canvas>
      <VolumeMax>5601</VolumeMax>
      <ExpandButton>
        <Glyph width="34" height="36" viewBox="0 0 34 36" fill="none" stroke={C.orange} strokeWidth="3">
          <path d="M16 2.500H2.500V17 M3 3L15 15.500 M31.500 19V33.500H18 M31 33L19.500 21" />
        </Glyph>
      </ExpandButton>
    </VolumeBox>
  );
}

const Dates = styled.div`
  height: 59px;
  flex: none;
  display: grid;
  grid-template-columns: repeat(5, 1fr);
  margin: 0 12px;
  border-bottom: 1px solid ${C.line};
  color: ${C.pale};
  font-size: 39px;
  line-height: 61px;
  span { padding-left: 66px; }
`;

/* ---------- notice and detail tabs ---------- */

const NoticeWrap = styled.div`
  height: 126px;
  flex: none;
  padding: 18px 18px 0;
  border-bottom: 1px solid ${C.line};
`;

const Notice = styled.div`
  height: 90px;
  display: flex;
  align-items: center;
  padding-left: 30px;
  border-radius: 45px;
  background: #fdeee6;
  color: ${C.orange};
  font-size: 39px;
  line-height: 86px;
  white-space: nowrap;
`;

const NoticeText = styled(Han)`
  flex: none;
  width: 827px;
  margin-left: 54px;
`;

const DetailTabs = styled.nav`
  height: 104px;
  flex: none;
  display: grid;
  grid-template-columns: repeat(7, 1fr);
  padding: 0 28px 0 26px;
  border-bottom: 1px solid ${C.line};
`;

const Blank = styled.div`
  height: 93px;
  flex: none;
`;

/* ---------- bottom bar ---------- */

const BottomBar = styled.nav`
  height: 136px;
  flex: none;
  display: grid;
  grid-template-columns: 275px 201px 202px 201px 201px;
  border-top: 1px solid #d3d7db;
  background: #f6f8fa;
`;

const IndexQuote = styled.div`
  display: flex;
  flex-direction: column;
  align-items: center;
  padding-top: 9px;
  color: ${C.green};
`;

const IndexValue = styled.div`
  height: 58px;
  padding-top: 4px;
  font-size: 51px;
  line-height: 59px;
`;

const IndexChange = styled.div`
  display: flex;
  align-items: center;
  gap: 31px;
  padding-left: 30px;
  width: 275px;
  font-size: 41px;
  line-height: 50px;
  ${Han} { font-size: 46px; color: ${C.grey}; }
`;

const Action = styled.a`
  display: flex;
  flex-direction: column;
  align-items: center;
  padding-top: 9px;
  color: ${C.grey};
  font-size: 45.500px;
  line-height: 60px;
  ${Han} { margin-top: 8px; }
`;

const SystemNav = styled.footer`
  height: 120px;
  flex: none;
  display: flex;
  align-items: center;
  padding-left: 277px;
  background: #000;
`;

export default function App() {
  return (
    <Page>
      <Global />
      <StatusBar>
        <Carrier $up={0.5}>中国移动</Carrier>
        <StatusIcons />
        <StatusText $w={83} $l={8} $size={35.5}>100%</StatusText>
        <Battery />
        <StatusText $w={170} $l={10}><Han>上午</Han>10:02</StatusText>
      </StatusBar>

      <TitleBar>
        <TitleLeft>
          <Glyph width="32" height="69" viewBox="0 0 32 69" fill="none" stroke={C.ink} strokeWidth="5" strokeLinecap="round">
            <path d="M28.500 10.500 L3.500 34.500 L28.500 58" />
          </Glyph>
          <Logo>东方<br />财富</Logo>
        </TitleLeft>
        <TitleCentre>
          <StockName>双象股份</StockName>
          <StockCode>
            <span>002395</span>
            <Badge><Han>融</Han></Badge>
            <Badge>L1</Badge>
            <Glyph width="22" height="15" viewBox="0 0 22 15" $l={5}><path d="M0 0H22L11 15Z" fill="#c8c8c8" /></Glyph>
          </StockCode>
        </TitleCentre>
        <TitleActions>
          <Glyph width="74" height="74" viewBox="0 0 74 74" $l={92}>
            <circle cx="37" cy="37" r="34.500" fill="none" stroke="#4169e0" strokeWidth="3" />
            <text x="13" y="51" fontFamily="Lato, sans-serif" fontWeight="900" fontSize="42" fill="#3264fa" stroke="#3264fa" strokeWidth="2" textLength="29" lengthAdjust="spacingAndGlyphs">A</text>
            <path d="M46.500 33 H56 L54 52.500 H44.500Z M51.500 17 Q53 21.500 57.500 23 Q53 24.500 51.500 29 Q50 24.500 45.500 23 Q50 21.500 51.500 17Z" fill="#3264fa" />
          </Glyph>
          <Glyph width="60" height="74" viewBox="0 0 60 74" $l={40} fill="none" stroke={C.ink} strokeWidth="4.200" strokeLinecap="round" strokeLinejoin="round">
            <path d="M22 10.500H6Q3 10.500 3 13.500V61Q3 64 6 64H54Q57 64 57 61V44 M37 10.500H57V30 M56 11.500L28 39.500" />
          </Glyph>
          <Glyph width="62" height="74" viewBox="0 0 62 74" $l={42} fill="none" stroke={C.ink} strokeWidth="4" strokeLinecap="round">
            <circle cx="30" cy="34.500" r="26" />
            <path d="M48 53 L60 64.500" />
          </Glyph>
        </TitleActions>
      </TitleBar>

      <Quote>
        <QuoteMain>
          <Price>17.87</Price>
          <Change><span>-1.71%</span><span>-0.31</span></Change>
          <CapMetric $size={32}><MetricName>总值</MetricName><Info /><b>47.93<Han>亿</Han></b></CapMetric>
        </QuoteMain>
        <Metrics>
          <Metric $tone={C.green}><MetricName>今开</MetricName><b>18.10</b></Metric>
          <Metric $tone={C.green}><MetricName>最高</MetricName><b>18.10</b></Metric>
          <Metric $tone={C.green}><MetricName>最低</MetricName><b>17.80</b></Metric>
          <Metric><MetricName>换手</MetricName><Info /><b>0.94%</b></Metric>
          <Metric><MetricName>总手</MetricName><b>25225</b></Metric>
          <Metric><MetricName>金额</MetricName><b>4516<Han>万</Han></b></Metric>
          <Metric><MetricName>流值</MetricName><b>47.92<Han>亿</Han></b></Metric>
          <Metric $size={37.5} $start><MetricName>市盈</MetricName><Sup>动</Sup><Info /><b>19.71</b></Metric>
          <MoreButton>更多</MoreButton>
        </Metrics>
      </Quote>

      <PeriodTabs>
        <Tab><Han>分时</Han></Tab>
        <Tab $active><Han>五日</Han></Tab>
        <Tab $nudge={3}><span><Han>日</Han>K</span></Tab>
        <Tab><span><Han>周</Han>K</span></Tab>
        <Tab $nudge={3}><span><Han>月</Han>K</span></Tab>
        <Tab $nudge={12}>
          <WithArrow><Han>更多</Han><Glyph width="15" height="12" viewBox="0 0 15 12"><path d="M0 0H15L7.500 12Z" fill={C.grey} /></Glyph></WithArrow>
        </Tab>
        <Glyph width="54" height="104" viewBox="0 0 54 104" $l={26} fill="none" stroke={C.grey} strokeWidth="4" strokeLinejoin="round">
          <path d="M22 28.500H32L34 36L39 39L46.500 37L51 45.500L46.500 50Q45.500 52 46.500 54L51 58.500L46.500 67L39 65L34 68.500L32 75.500H22L20 68.500L15 65L7.500 67L3 58.500L7.500 54Q8.500 52 7.500 50L3 45.500L7.500 37L15 39L20 36Z" />
          <circle cx="27" cy="52" r="8.500" />
        </Glyph>
      </PeriodTabs>

      <Legend>
        <LegendItem $w={108} $tone={C.yellow}><Han $up={0.5}>均价：</Han></LegendItem>
        <LegendItem $w={98} $tone={C.yellow}>17.90</LegendItem>
        <LegendItem $w={108}><Han $up={0.5}>最新：</Han></LegendItem>
        <LegendItem $w={107}>17.87</LegendItem>
        <LegendItem $w={98}>-0.73</LegendItem>
        <LegendItem $w={120}>-3.92%</LegendItem>
      </Legend>

      <PriceChart />

      <VolumeHead>
        <IndicatorChip>
          <Han>成交量</Han>
          <Glyph width="15" height="12" viewBox="0 0 15 12"><path d="M0 0H15L7.500 12Z" fill={C.grey} /></Glyph>
        </IndicatorChip>
        <VolumeItem $w={136}>25225</VolumeItem>
        <VolumeItem $w={162}><Han>分时量</Han>:64</VolumeItem>
        <UpArrow width="20" height="34" viewBox="0 0 20 34" fill="none" stroke={C.ink} strokeWidth="2.200">
          <path d="M10 34V2 M1 11L10 2L19 11" />
        </UpArrow>
        <VolumeItem $w={120}><Han>现量</Han>:<em>8</em></VolumeItem>
      </VolumeHead>

      <VolumeChart />

      <Dates>
        {['10/22', '10/23', '10/24', '10/27', '10/28'].map((d) => <span key={d}>{d}</span>)}
      </Dates>

      <NoticeWrap>
        <Notice>
          <Glyph width="45" height="40" viewBox="0 0 45 40" fill="#eb5500">
            <path d="M0 12H3.500V27H0Z M9 12.500L17 10L45 0V40L26 33.500V37L17 33L16 29L9 27Z" />
          </Glyph>
          <NoticeText $up={3.5}>十一月机会在哪？这四条主线或成市场焦点</NoticeText>
          <Glyph width="52" height="38" viewBox="0 0 52 38" fill="none" stroke={C.orange}>
            <path d="M1.500 1V37" strokeWidth="1.500" />
            <path d="M18.500 3.500L50 35 M50 3.500L18.500 35" strokeWidth="3" />
          </Glyph>
        </Notice>
      </NoticeWrap>

      <DetailTabs>
        {['股吧', '盘口', '资讯', '公告', '研报', '财务', '资料'].map((t) => (
          <Tab key={t} $active={t === '资料'}><Han>{t}</Han></Tab>
        ))}
      </DetailTabs>

      <Blank />

      <BottomBar>
        <IndexQuote>
          <Glyph width="20" height="8" viewBox="0 0 20 8"><path d="M0 8L10 0L20 8Z" fill="#777" /></Glyph>
          <IndexValue>3987.59</IndexValue>
          <IndexChange><Han $up={3}>上证</Han><span>-0.23%</span></IndexChange>
        </IndexQuote>
        <Action>
          <Glyph width="66" height="60" viewBox="0 0 66 60" fill="none" stroke={C.grey} strokeWidth="2.800">
            <path d="M17 8 A27.500 27.500 0 0 1 59 39 M49 52 A27.500 27.500 0 0 1 8.500 18 M1 20.500L9.500 16V23 M64.500 40L57 44V37" />
            <path d="M24 17L33 28L42 17 M33 28V45 M23 28.500H43 M23 37.500H43" />
          </Glyph>
          <Han $up={2.5}>交易</Han>
        </Action>
        <Action>
          <Glyph width="56" height="60" viewBox="0 0 56 60" fill="none" stroke={C.grey} strokeWidth="2.800">
            <path d="M39 4.500H9Q2 4.500 2 11V50Q2 56.500 9 56.500H47Q54 56.500 54 50V19" />
            <path d="M44 9.500L51 16L24 36.500L19 39L21.500 33Z M47 6L51 2L56 6L53.500 12Z" fill={C.grey} stroke="none" />
          </Glyph>
          <Han $up={2.5}>发帖</Han>
        </Action>
        <Action>
          <Glyph width="54" height="60" viewBox="0 0 54 60" fill="none" stroke={C.grey} strokeWidth="2.800" strokeLinejoin="round">
            <rect x="2" y="5.500" width="22" height="22" rx="3.500" />
            <rect x="2" y="33" width="22" height="22" rx="3.500" />
            <rect x="29.500" y="33" width="22" height="22" rx="3.500" />
            <path d="M40.500 4.500L52.500 16.500L40.500 28.500L28.500 16.500Z" />
          </Glyph>
          <Han $up={4}>功能</Han>
        </Action>
        <Action>
          <Glyph width="58" height="60" viewBox="0 0 58 60" fill="none" stroke={C.grey} strokeWidth="2.600">
            <circle cx="29" cy="30" r="27" />
            <g fill={C.grey} stroke="none"><circle cx="17" cy="30" r="3" /><circle cx="29" cy="30" r="3" /><circle cx="41" cy="30" r="3" /></g>
          </Glyph>
          <Han $up={2.5}>设自选</Han>
        </Action>
      </BottomBar>

      <SystemNav>
        <Glyph width="46" height="52" viewBox="0 0 46 52" fill="none" stroke="#b2b2b2" strokeWidth="4" strokeLinejoin="round">
          <path d="M42.500 3V49L3.500 26Z" />
        </Glyph>
        <Glyph width="50" height="50" viewBox="0 0 50 50" $l={192} fill="none" stroke="#b2b2b2" strokeWidth="4">
          <circle cx="25" cy="25" r="22.800" />
        </Glyph>
        <Glyph width="46" height="46" viewBox="0 0 46 46" $l={192} fill="none" stroke="#b2b2b2" strokeWidth="4" strokeLinejoin="round">
          <rect x="2.500" y="2.500" width="41" height="41" rx="1.500" />
        </Glyph>
      </SystemNav>
    </Page>
  );
}
